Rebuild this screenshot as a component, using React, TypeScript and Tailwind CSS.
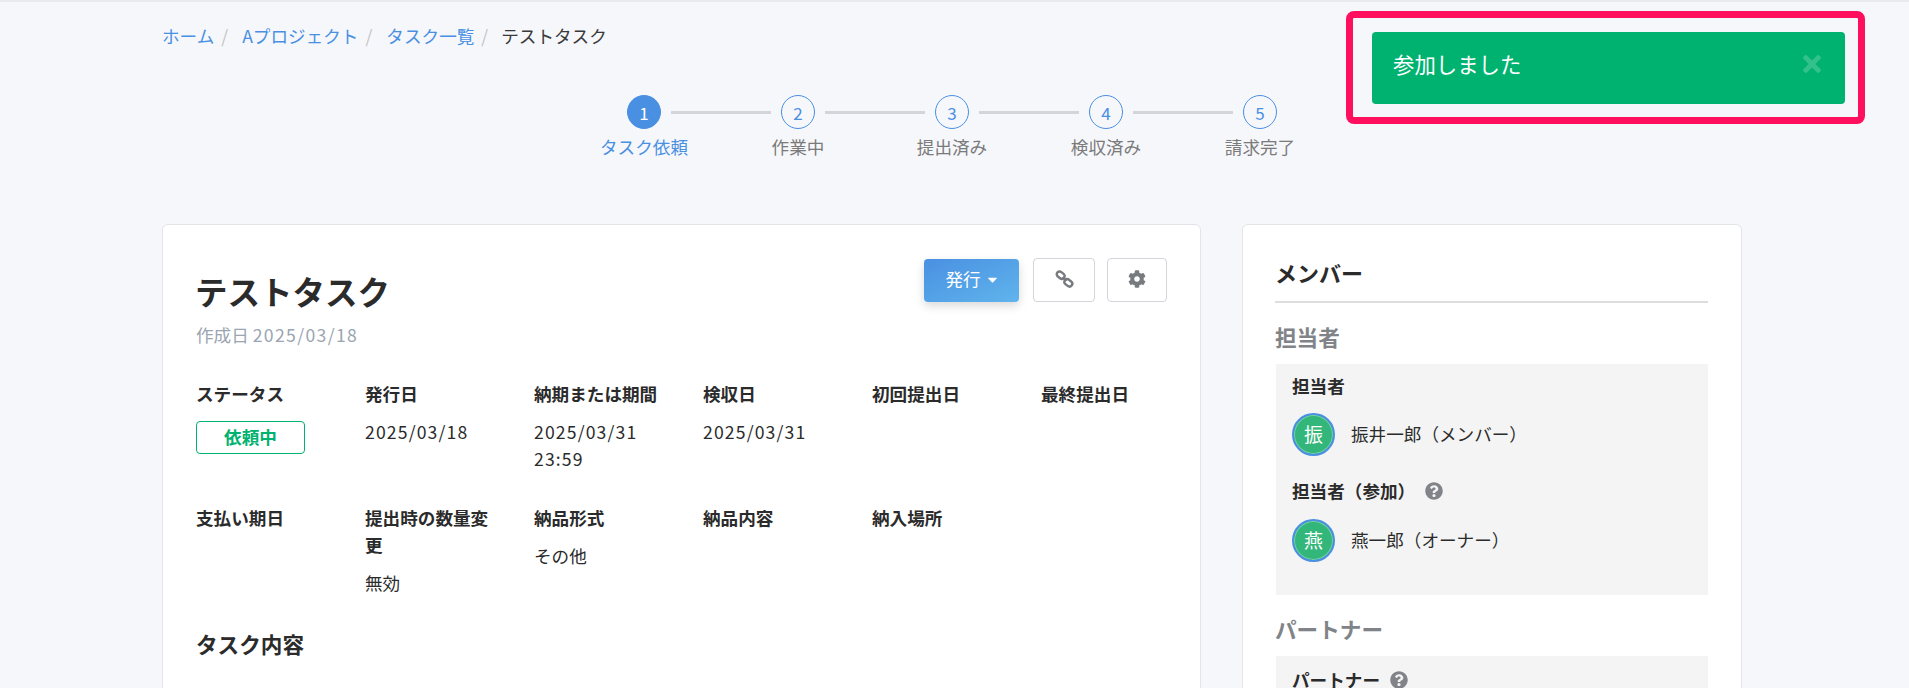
import React from "react";
import { FaCog, FaTimes, FaQuestionCircle, FaCaretDown } from "react-icons/fa";

const font = { fontFamily: '"Noto Sans CJK JP", "Noto Sans", sans-serif' };

function LinkIcon() {
  return (
    <svg width="19" height="18" viewBox="0 0 20 19" fill="none" stroke="#777b80" strokeWidth="2.6" className="-mt-[3px]">
      <rect x="1.5" y="2.5" width="9" height="6" rx="3" transform="rotate(38 6 5.5)" />
      <rect x="9.5" y="10.5" width="9" height="6" rx="3" transform="rotate(38 14 13.5)" />
      <path d="M8 7.5l4 4" />
    </svg>
  );
}

const steps = ["タスク依頼", "作業中", "提出済み", "検収済み", "請求完了"];

function Stepper() {
  return (
    <div className="flex justify-center">
      {steps.map((s, i) => (
        <div key={s} className="relative flex w-[154px] flex-col items-center">
          <div
            className={
              i === 0
                ? "flex h-[34px] w-[34px] items-center justify-center rounded-full border border-[#4a90e2] bg-[#4a90e2] text-[17px] leading-none text-white"
                : "flex h-[34px] w-[34px] items-center justify-center rounded-full border border-[#4a90e2] text-[17px] leading-none text-[#4a90e2]"
            }
          >
            {i + 1}
          </div>
          {i < 4 && <div className="absolute left-[104px] top-[16px] h-[3px] w-[100px] bg-[#d4d5da]" />}
          <div className={i === 0 ? "mt-[4px] text-[17.6px] leading-[27px] text-[#4a90e2]" : "mt-[4px] text-[17.6px] leading-[27px] text-[#7a7a7a]"}>
            {s}
          </div>
        </div>
      ))}
    </div>
  );
}

function Field({ label, children, date }: { label: string; children?: React.ReactNode; date?: boolean }) {
  return (
    <div className="pr-[30px]">
      <div className="text-[17.6px] font-bold leading-[27px] text-[#2b2b2b]">{label}</div>
      {children && (
        <div className={date ? "mt-[11px] text-[17.6px] leading-[27px] tracking-[1.15px] text-[#2b2b2b]" : "mt-[11px] text-[17.6px] leading-[27px] text-[#2b2b2b]"}>
          {children}
        </div>
      )}
    </div>
  );
}

function Avatar({ c }: { c: string }) {
  return (
    <div className="flex h-[43px] w-[43px] items-center justify-center rounded-full border-2 border-[#4a90e2] bg-[#33b679] text-[19px] text-white shadow-[inset_0_0_0_1px_rgba(255,255,255,0.35)]">
      {c}
    </div>
  );
}

function Person({ c, name }: { c: string; name: string }) {
  return (
    <div className="flex items-center gap-[16px]">
      <Avatar c={c} />
      <span className="mb-[3px] text-[17.6px] leading-[27px] text-[#2b2b2b]">{name}</span>
    </div>
  );
}

export default function App() {
  return (
    <div style={font} className="relative h-[688px] overflow-hidden bg-[#f6f7fb]">
      <div className="h-[2px] bg-[#e9eaee]" />
      <div className="ml-[162px] w-[1580px]">
        <div className="mt-[20px] flex h-[27px] items-center text-[17.6px] leading-[27px]">
          <a className="text-[#4a90e2]">ホーム</a>
          <span className="ml-[7px] mr-[14px] text-[#c4c4c4]">/</span>
          <a className="text-[#4a90e2]">Aプロジェクト</a>
          <span className="ml-[7px] mr-[14px] text-[#c4c4c4]">/</span>
          <a className="text-[#4a90e2]">タスク一覧</a>
          <span className="ml-[7px] mr-[13px] text-[#c4c4c4]">/</span>
          <span className="text-[#3a3a3a]">テストタスク</span>
        </div>
        <div className="mt-[46px]">
          <Stepper />
        </div>
        <div className="mt-[64px] flex items-start gap-[41px]">
          <div className="h-[600px] w-[1039px] rounded-[6px] border border-[#e3e4e8] bg-white pl-[33px] pr-[33px] pt-[33px]">
            <div className="flex items-start justify-between">
              <div className="pt-[9px]">
                <h1 className="-ml-[1px] text-[32.5px] font-bold leading-[48px] text-[#2b2b2b]">テストタスク</h1>
                <div className="mt-[6px] text-[17.6px] leading-[27px] text-[#9aa5b1]">
                  作成日 <span className="tracking-[1.35px]">2025/03/18</span>
                </div>
              </div>
              <div className="flex items-start">
                <button className="mt-[1px] flex h-[43px] w-[95px] items-center justify-center gap-[4px] rounded-[4px] bg-gradient-to-br from-[#4a90e2] to-[#60b4ec] pb-[3px] pl-[2px] text-[17.6px] text-white shadow-[0_4px_10px_rgba(0,0,0,0.15)]">
                  発行
                  <FaCaretDown className="text-[15px]" />
                </button>
                <button className="ml-[14px] flex h-[44px] w-[62px] items-center justify-center rounded-[4px] border border-[#d4d5da] bg-white">
                  <LinkIcon />
                </button>
                <button className="ml-[12px] flex h-[44px] w-[60px] items-center justify-center rounded-[4px] border border-[#d4d5da] bg-white">
                  <FaCog className="-mt-[3px] text-[18px] text-[#777b80]" />
                </button>
              </div>
            </div>
            <div className="mt-[32px] grid w-[1014px] grid-cols-6 gap-y-[32px]">
              <div className="pr-[30px]">
                <div className="text-[17.6px] font-bold leading-[27px] text-[#2b2b2b]">ステータス</div>
                <div className="mt-[14px] flex h-[33px] w-[109px] items-center justify-center rounded-[4px] border border-[#00b26f] text-[17.6px] font-bold text-[#00b26f]">
                  依頼中
                </div>
              </div>
              <Field label="発行日" date>2025/03/18</Field>
              <Field label="納期または期間" date>2025/03/31 23:59</Field>
              <Field label="検収日" date>2025/03/31</Field>
              <Field label="初回提出日" />
              <Field label="最終提出日" />
              <Field label="支払い期日" />
              <Field label="提出時の数量変更">無効</Field>
              <Field label="納品形式">その他</Field>
              <Field label="納品内容" />
              <Field label="納入場所" />
            </div>
            <h2 className="mt-[32px] text-[21.6px] font-bold leading-[32px] text-[#2b2b2b]">タスク内容</h2>
          </div>
          <div className="h-[600px] w-[500px] rounded-[6px] border border-[#e3e4e8] bg-white px-[33px] pt-[31px]">
            <h2 className="-ml-[1px] border-b-2 border-[#dddddd] pb-[13px] pl-[0px] text-[22px] font-bold leading-[32px] text-[#2b2b2b]">メンバー</h2>
            <h3 className="-ml-[1px] mt-[18px] text-[21.6px] font-bold leading-[32px] text-[#808488]">担当者</h3>
            <div className="mt-[11px] h-[231px] bg-[#f4f4f5] px-[16px] pt-[8px]">
              <div className="text-[17.6px] font-bold leading-[27px] text-[#2b2b2b]">担当者</div>
              <div className="mt-[14px]">
                <Person c="振" name="振井一郎（メンバー）" />
              </div>
              <div className="mt-[21px] flex items-center gap-[10px] text-[17.6px] font-bold leading-[27px] text-[#2b2b2b]">
                担当者（参加）
                <FaQuestionCircle className="text-[18px] text-[#808488]" />
              </div>
              <div className="mt-[15px]">
                <Person c="燕" name="燕一郎（オーナー）" />
              </div>
            </div>
            <h3 className="-ml-[1px] mt-[18px] text-[21.6px] font-bold leading-[32px] text-[#808488]">パートナー</h3>
            <div className="mt-[11px] h-[200px] bg-[#f4f4f5] px-[16px] pt-[10px]">
              <div className="flex items-center gap-[10px] text-[17.6px] font-bold leading-[27px] text-[#2b2b2b]">
                パートナー
                <FaQuestionCircle className="text-[18px] text-[#808488]" />
              </div>
            </div>
          </div>
        </div>
      </div>
      <div className="absolute left-[1346px] top-[11px] h-[113px] w-[519px] rounded-[8px] border-[7px] border-[#ff0f5e] pl-[19px] pr-[13px] pt-[14px]">
        <div className="flex h-[72px] items-center justify-between rounded-[4px] bg-[#00b26f] pl-[21px] pr-[20px] text-[21.4px] text-white">
          <span className="mb-[7px]">参加しました</span>
          <FaTimes className="mb-[8px] text-[26px] text-white/20" />
        </div>
      </div>
    </div>
  );
}
